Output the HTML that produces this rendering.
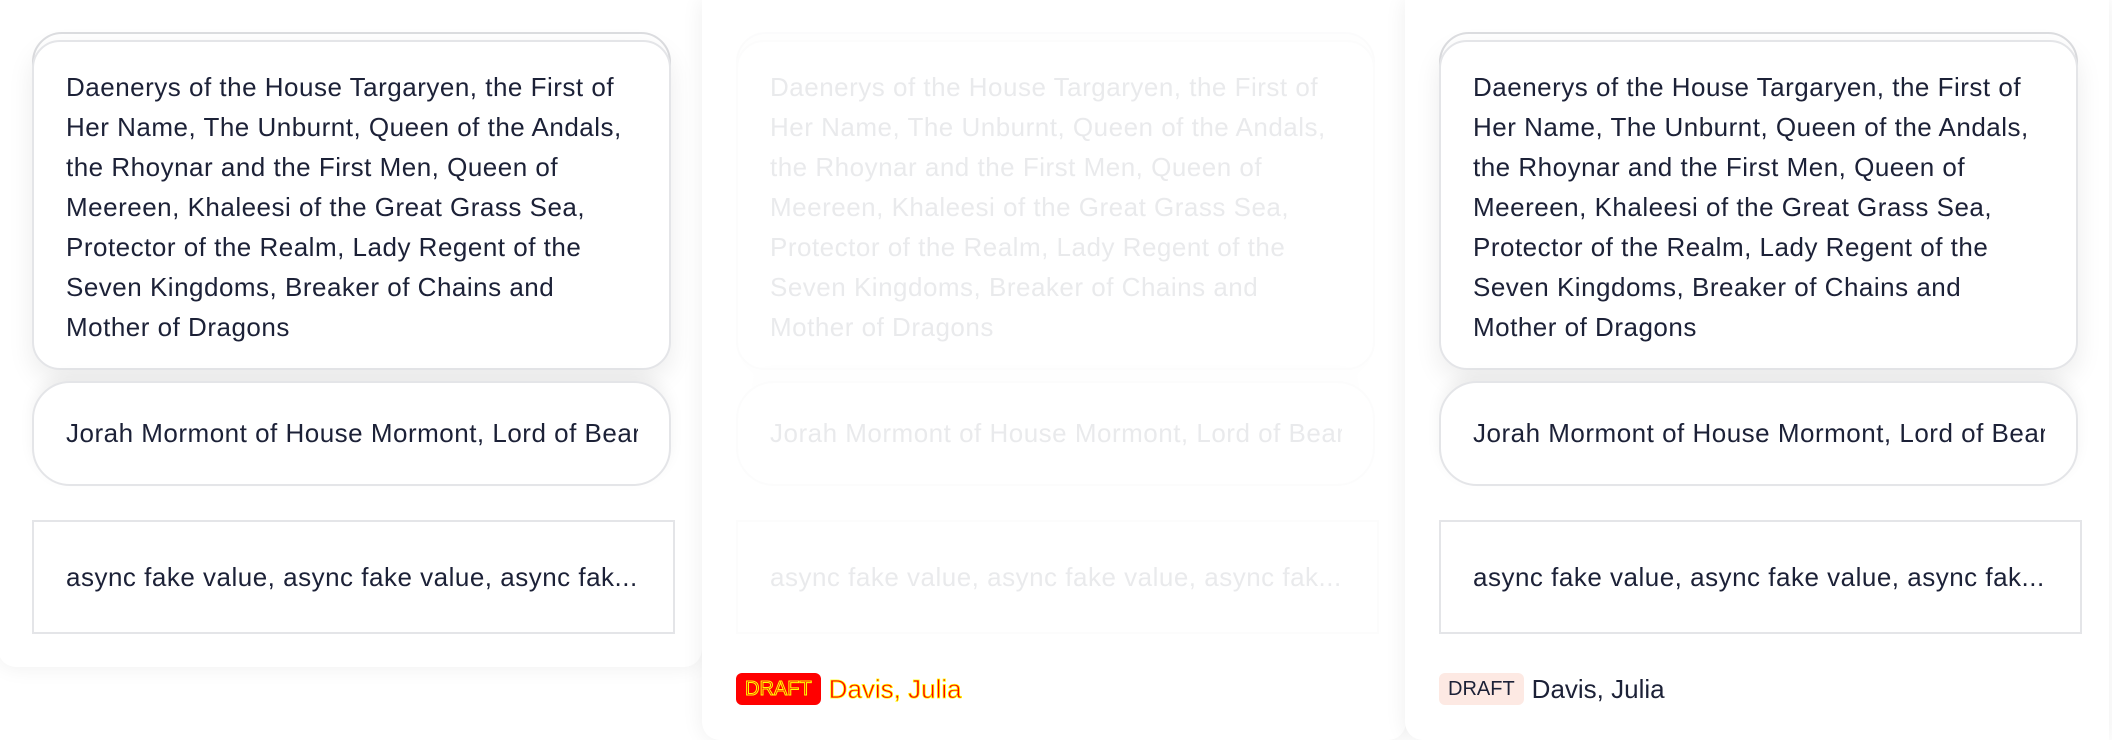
<!DOCTYPE html>
<html><head><style>
*{box-sizing:border-box;margin:0;padding:0}
body{width:2112px;height:740px;background:#fff;position:relative;overflow:hidden;font-family:"Liberation Sans",sans-serif;color:#1c2137}
.panel{position:absolute;top:0;width:704px;background:#fff;box-shadow:0 0 22px rgba(0,0,0,.07)}
.p1{left:-2px;height:667px;border-radius:0 0 18px 18px}
.p2{left:702px;height:740px;border-radius:0 0 18px 18px}
.p3{left:1405px;height:740px;border-radius:0 0 0 18px}
.fade{opacity:.09}
.back{position:absolute;left:34px;top:32px;width:639px;height:60px;border:2px solid #dcdde0;border-radius:30px;background:#fff}
.c1{position:absolute;left:34px;top:40px;width:639px;height:330px;border:2px solid #e4e5e8;border-radius:28px;background:#fff;box-shadow:0 10px 26px rgba(0,0,0,.08);padding:25px 0 0 32px;font-size:26px;line-height:40px;letter-spacing:.5px;white-space:nowrap}
.c2{position:absolute;left:34px;top:381px;width:639px;height:105px;border:2px solid #e4e5e8;border-radius:38px;background:#fff;box-shadow:0 -6px 14px rgba(0,0,0,.05);padding:0 32px;font-size:26px;line-height:101px;white-space:nowrap;overflow:hidden;letter-spacing:.5px}
.c2 span{display:block;overflow:hidden;width:572px}
.c3{position:absolute;left:34px;top:520px;width:643px;height:114px;border:2px solid #e4e5e8;background:#fff;padding:0 32px;font-size:26px;line-height:110px;white-space:nowrap;letter-spacing:.5px}
.foot{position:absolute;left:34px;top:673px;height:32px;display:flex;align-items:center;font-size:26px}
.badge{background:#fde9e3;border-radius:6px;font-size:20px;padding:0 9px;height:32px;line-height:32px;margin-right:8px;color:#1c2137}
.redb{background:#f00;color:#f00;-webkit-text-stroke:1px #ff0}
.redt{color:#f00;-webkit-text-stroke:.8px #ff0}
</style></head><body>
<div class="panel p1">
 <div class="back"></div>
 <div class="c1">Daenerys of the House Targaryen, the First of<br>Her Name, The Unburnt, Queen of the Andals,<br>the Rhoynar and the First Men, Queen of<br>Meereen, Khaleesi of the Great Grass Sea,<br>Protector of the Realm, Lady Regent of the<br>Seven Kingdoms, Breaker of Chains and<br>Mother of Dragons</div>
 <div class="c2"><span>Jorah Mormont of House Mormont, Lord of Bear Island</span></div>
 <div class="c3">async fake value, async fake value, async fak...</div>
</div>
<div class="panel p2">
 <div class="fade">
 <div class="back"></div>
 <div class="c1">Daenerys of the House Targaryen, the First of<br>Her Name, The Unburnt, Queen of the Andals,<br>the Rhoynar and the First Men, Queen of<br>Meereen, Khaleesi of the Great Grass Sea,<br>Protector of the Realm, Lady Regent of the<br>Seven Kingdoms, Breaker of Chains and<br>Mother of Dragons</div>
 <div class="c2"><span>Jorah Mormont of House Mormont, Lord of Bear Island</span></div>
 <div class="c3">async fake value, async fake value, async fak...</div>
 </div>
 <div class="foot"><span class="badge redb">DRAFT</span><span class="redt">Davis, Julia</span></div>
</div>
<div class="panel p3">
 <div class="back"></div>
 <div class="c1">Daenerys of the House Targaryen, the First of<br>Her Name, The Unburnt, Queen of the Andals,<br>the Rhoynar and the First Men, Queen of<br>Meereen, Khaleesi of the Great Grass Sea,<br>Protector of the Realm, Lady Regent of the<br>Seven Kingdoms, Breaker of Chains and<br>Mother of Dragons</div>
 <div class="c2"><span>Jorah Mormont of House Mormont, Lord of Bear Island</span></div>
 <div class="c3">async fake value, async fake value, async fak...</div>
 <div class="foot"><span class="badge">DRAFT</span><span>Davis, Julia</span></div>
</div>
</body></html>
